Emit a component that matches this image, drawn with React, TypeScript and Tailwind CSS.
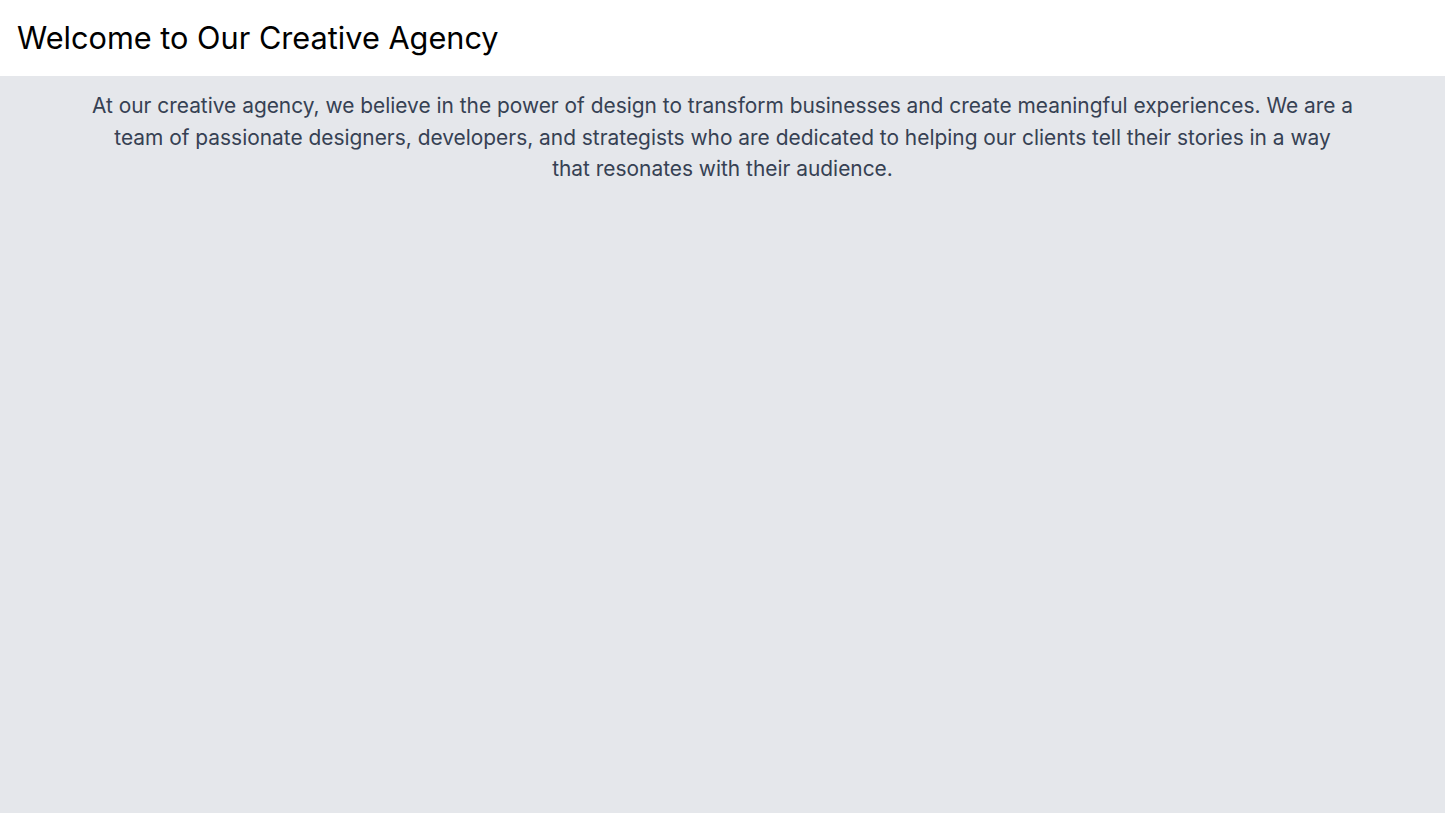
export default function App() {
  return (
    <div className="min-h-screen bg-gray-200 font-['Inter',sans-serif]">
      <header className="bg-white px-[17px] py-5">
        <h1 className="text-[30.7px] leading-9 text-black">Welcome to Our Creative Agency</h1>
      </header>
      <main className="max-w-screen-xl mx-auto pt-[14px]">
        <p className="text-[20.9px] leading-[31.5px] text-gray-700 text-center">
          At our creative agency, we believe in the power of design to transform businesses and create meaningful
          experiences. We are a team of passionate designers, developers, and strategists who are dedicated to helping
          our clients tell their stories in a way that{'\u00a0'}resonates with their audience.
        </p>
      </main>
    </div>
  )
}
